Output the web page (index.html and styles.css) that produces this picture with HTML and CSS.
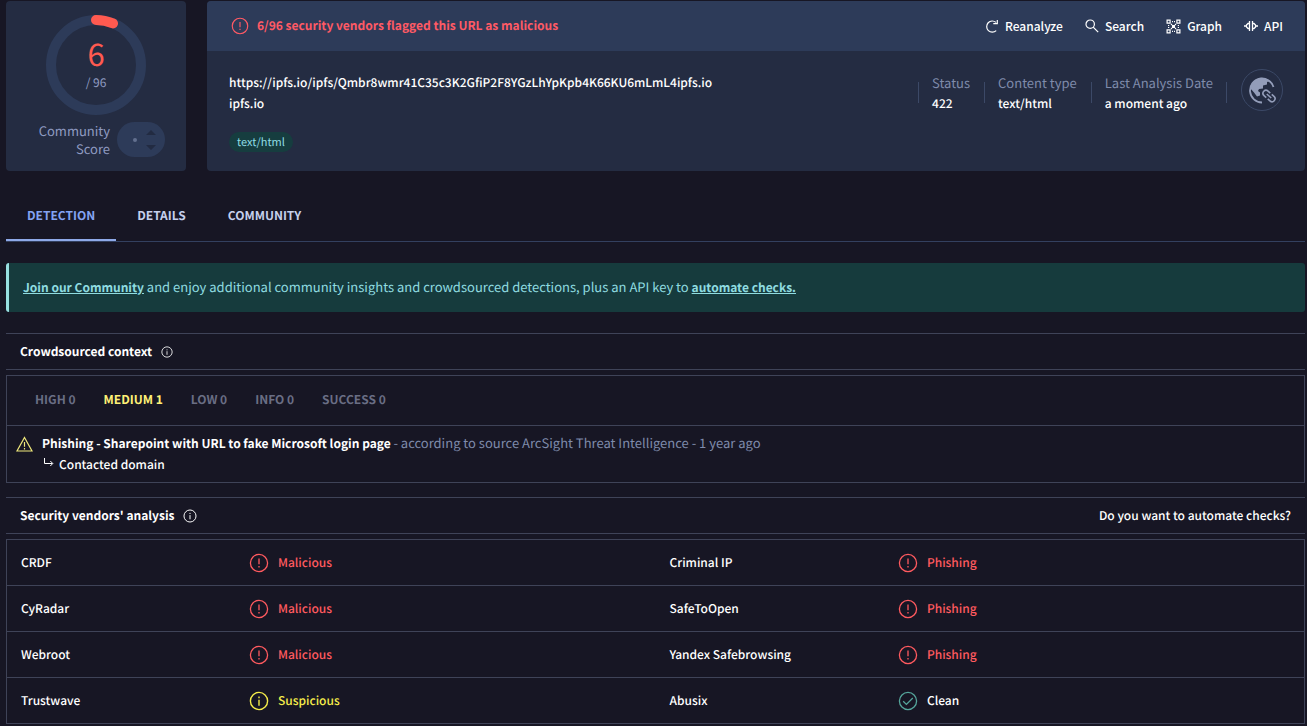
FILE: index.html
```html
<!DOCTYPE html>
<html lang="en">
<head>
<meta charset="utf-8">
<title>URL report</title>
<link rel="stylesheet" href="styles.css">
</head>
<body>
<svg class="defs" aria-hidden="true">
  <symbol id="alert" viewBox="0 0 20 20"><g fill="none" stroke="currentColor" stroke-width="1.3"><circle cx="10" cy="10" r="8.6"/><path d="M10 5.5v5.8M10 13v1.5"/></g></symbol>
  <symbol id="info" viewBox="0 0 20 20"><g fill="none" stroke="currentColor" stroke-width="1.4"><circle cx="10" cy="10" r="8.6"/><path d="M10 8.7v6M10 5.6v1.6"/></g></symbol>
  <symbol id="check" viewBox="0 0 20 20"><g fill="none" stroke="currentColor" stroke-width="1.3"><circle cx="10" cy="10" r="8.6"/><path d="M5.2 10.2l3.2 3.2 6.4-6.4"/></g></symbol>
</svg>
<main class="page">
  <section class="summary">
    <div class="score-card">
      <div class="gauge">
        <svg viewBox="0 0 100 100" aria-hidden="true">
          <circle cx="50" cy="50" r="45" fill="none" stroke="#2d3b59" stroke-width="10"/>
          <path d="M50 5A45 45 0 0 1 67 8.4" fill="none" stroke="#ff5a50" stroke-width="10" stroke-linecap="round"/>
        </svg>
        <div class="gauge-text"><span class="hits">6</span><span class="total">/ 96</span></div>
      </div>
      <div class="community">
        <span class="community-label">Community<br>Score</span>
        <span class="votes"><i class="dot"></i><svg width="10" height="20" viewBox="0 0 10 20" fill="#222b42" aria-hidden="true"><path d="M0 5l5-5 5 5zM0 15l5 5 5-5z"/></svg></span>
      </div>
    </div>
    <div class="url-card">
      <header class="url-head">
        <p class="flagged"><svg class="icon-18"><use href="#alert"/></svg>6/96 security vendors flagged this URL as malicious</p>
        <div class="actions">
          <button type="button"><svg width="14" height="14" viewBox="0 0 14 14" fill="none" stroke="currentColor" stroke-width="1.2"><path d="M11.2 11.600A5.600 5.600 0 1 1 11 3.400M12.300 1v3.700H8.300"/></svg>Reanalyze</button>
          <button type="button"><svg width="14" height="14" viewBox="0 0 14 14" fill="none" stroke="currentColor" stroke-width="1.2"><circle cx="5.2" cy="5.2" r="4.2"/><path d="M8.2 8.2l5 5"/></svg>Search</button>
          <button type="button"><svg width="15" height="15" viewBox="0 0 15 15" fill="none" stroke="currentColor" stroke-width="1.2"><path d="M1.1 1.1h3v3h-3zM10.9 1.1h3v3h-3zM1.1 10.9h3v3h-3zM10.9 10.9h3v3h-3z"/><path d="M6 2.6h3M6 12.4h3M2.6 6v3M12.4 6v3" stroke-dasharray="1 1"/><path d="M5 5l1 1M10 5l-1 1M5 10l1-1M10 10l-1-1"/><path d="M6 6h3v3H6z" fill="currentColor" stroke="none"/></svg>Graph</button>
          <button type="button"><svg width="14" height="12" viewBox="0 0 14 12" fill="none" stroke="currentColor" stroke-width="1.3"><path d="M5.500 1v10M8.500 1v10M5.500 3.500H4L2.500 5v2L4 8.500h1.500M8.500 3.500H10L11.500 5v2L10 8.500H8.500M0 6h2.500M11.500 6H14"/></svg>API</button>
        </div>
      </header>
      <div class="url-body">
        <div class="url-info">
          <p>https://ipfs.io/ipfs/Qmbr8wmr41C35c3K2GfiP2F8YGzLhYpKpb4K66KU6mLmL4ipfs.io</p>
          <p>ipfs.io</p>
          <span class="tag">text/html</span>
        </div>
        <dl class="facts">
          <div><dt>Status</dt><dd>422</dd></div>
          <div><dt>Content type</dt><dd>text/html</dd></div>
          <div><dt>Last Analysis Date</dt><dd>a moment ago</dd></div>
        </dl>
        <svg class="globe" viewBox="0 0 42 42" aria-hidden="true">
          <circle cx="21" cy="21" r="20.5" fill="none" stroke="#3c4967"/>
          <path d="M21 33.5A12 12 0 1 1 32.5 18" fill="none" stroke="#939db9" stroke-width="1.8"/>
          <path d="M9 19c1-5 5-9 11-10.3l6 1.3 3 2-3 1v2.5l-4 1v3l-4 .5-1 2 2 1.500v3l-3 1-3-4z" fill="#939db9"/>
          <g transform="translate(28 27) rotate(42)" fill="none" stroke="#939db9" stroke-width="1.6"><path d="M-1-3h-3a3 3 0 0 0 0 6h3M1-3h3a3 3 0 0 1 0 6h-3M-3 0h6"/></g>
        </svg>
      </div>
    </div>
  </section>

  <nav class="tabs">
    <a class="active" href="#detection">DETECTION</a>
    <a href="#details">DETAILS</a>
    <a href="#community">COMMUNITY</a>
  </nav>

  <p class="banner"><a href="#join">Join our Community</a> and enjoy additional community insights and crowdsourced detections, plus an API key to <a href="#automate">automate checks.</a></p>

  <section class="block">
    <div class="block-head"><h2>Crowdsourced context</h2><svg class="icon-12"><use href="#info"/></svg></div>
    <div class="context">
      <div class="levels"><span>HIGH 0</span><span class="medium">MEDIUM 1</span><span>LOW 0</span><span>INFO 0</span><span>SUCCESS 0</span></div>
      <div class="finding">
        <svg width="17" height="16" viewBox="0 0 17 16" fill="none" stroke="#efe87a" stroke-width="1.2" aria-hidden="true"><path d="M8.500 1.500L16 15H1zM8.500 6v4.800M8.500 12v1.500"/></svg>
        <div>
          <p><strong>Phishing - Sharepoint with URL to fake Microsoft login page</strong> <span class="source">- according to source ArcSight Threat Intelligence - 1 year ago</span></p>
          <p class="contacted"><svg width="10" height="9" viewBox="0 0 10 9" fill="none" stroke="currentColor" aria-hidden="true"><path d="M.5 0v5.500h8M6.300 3l2.500 2.500L6.300 8"/></svg>Contacted domain</p>
        </div>
      </div>
    </div>
  </section>

  <section class="block">
    <div class="block-head"><h2>Security vendors' analysis</h2><svg class="icon-14"><use href="#info"/></svg><a class="automate" href="#automate">Do you want to automate checks?</a></div>
    <table class="vendors">
      <tr><td>CRDF</td><td><span class="verdict bad"><svg><use href="#alert"/></svg>Malicious</span></td><td>Criminal IP</td><td><span class="verdict bad"><svg><use href="#alert"/></svg>Phishing</span></td></tr>
      <tr><td>CyRadar</td><td><span class="verdict bad"><svg><use href="#alert"/></svg>Malicious</span></td><td>SafeToOpen</td><td><span class="verdict bad"><svg><use href="#alert"/></svg>Phishing</span></td></tr>
      <tr><td>Webroot</td><td><span class="verdict bad"><svg><use href="#alert"/></svg>Malicious</span></td><td>Yandex Safebrowsing</td><td><span class="verdict bad"><svg><use href="#alert"/></svg>Phishing</span></td></tr>
      <tr><td>Trustwave</td><td><span class="verdict warn"><svg><use href="#info"/></svg>Suspicious</span></td><td>Abusix</td><td><span class="verdict clean"><svg><use href="#check"/></svg>Clean</span></td></tr>
    </table>
  </section>
</main>
</body>
</html>
```
FILE: styles.css
```css
* { box-sizing: border-box; }
body {
  margin: 0;
  background: #171624;
  color: #fff;
  font: 500 12px/20px "Noto Sans CJK JP", "Noto Sans", sans-serif;
  text-rendering: geometricPrecision;
}
p, h2, dl, dd { margin: 0; }
svg { flex: none; display: block; }
.defs { position: absolute; width: 0; height: 0; }
.page { padding: 1px 2px 0 6px; }
.icon-18 { width: 18px; height: 18px; }
.icon-14 { width: 14px; height: 14px; }
.icon-12 { width: 12px; height: 12px; }

.summary { display: flex; gap: 21px; }
.score-card {
  width: 180px;
  padding-top: 14px;
  background: #242c42;
  border-radius: 4px;
}
.gauge { display: grid; width: 100px; height: 100px; margin: 0 auto; }
.gauge > * { grid-area: 1 / 1; }
.gauge-text { display: flex; flex-direction: column; align-items: center; padding-top: 16px; font-weight: 400; }
.hits { color: #ff5a50; font-size: 31px; line-height: 44px; }
.total { color: #8f9bc1; font-size: 12px; line-height: 16px; }
.community { display: flex; justify-content: flex-end; gap: 7px; padding: 7px 21px 0 0; }
.community-label { color: #8f9bc1; font-size: 13px; font-weight: 400; line-height: 18px; text-align: right; }
.votes {
  display: flex;
  align-items: center;
  justify-content: flex-end;
  gap: 9px;
  width: 48px;
  height: 35px;
  padding-right: 9px;
  background: #2d3b59;
  border-radius: 18px;
}
.dot { width: 4px; height: 4px; border-radius: 50%; background: #62708f; }

.url-card { flex: 1; min-height: 170px; background: #242c42; border-radius: 4px; overflow: hidden; }
.url-head {
  display: flex;
  align-items: center;
  justify-content: space-between;
  height: 50px;
  padding: 0 22px 0 24px;
  background: #2d3b59;
}
.flagged { display: flex; align-items: center; gap: 8px; color: #ff5a65; font-weight: 700; }
.actions { display: flex; gap: 22px; }
.actions button {
  display: flex;
  align-items: center;
  gap: 6px;
  padding: 0;
  border: 0;
  background: none;
  color: #fff;
  font: inherit;
}
.url-body { display: flex; padding: 21px 22px 0; line-height: 21px; }
.url-info { flex: 1; }
.tag {
  display: inline-block;
  margin-top: 18px;
  padding: 0 8px;
  border-radius: 10px;
  background: #163d3f;
  color: #8fdde5;
  font-size: 11px;
  font-weight: 400;
  line-height: 20px;
}
.facts { display: flex; }
.facts div { position: relative; padding: 0 14px; }
.facts div::before, .facts div:last-child::after {
  content: "";
  position: absolute;
  top: 10px;
  left: 0;
  width: 1px;
  height: 21px;
  background: #3c4967;
}
.facts div:last-child::after { left: auto; right: 0; }
.facts dt { color: #7f8bab; font-size: 13px; font-weight: 400; }
.globe { width: 42px; height: 42px; margin: -3px 0 0 14px; }

.tabs { display: flex; margin-top: 21px; border-bottom: 1px solid #33405f; }
.tabs a {
  padding: 14px 21px 13px;
  border-bottom: 2px solid transparent;
  color: #c6d0ec;
  font-weight: 700;
  text-decoration: none;
}
.tabs .active { color: #84a3f3; border-color: #8ea9e8; }

.banner {
  margin-top: 21px;
  padding: 14px;
  border-left: 3px solid #98dfe0;
  border-radius: 3px;
  background: #163b3d;
  color: #8fdce0;
  font-size: 13px;
  font-weight: 400;
}
.banner a { color: inherit; font-size: 12px; font-weight: 700; }

.block { margin-top: 21px; }
.block + .block { margin-top: 14px; }
.block-head {
  display: flex;
  align-items: center;
  height: 37px;
  padding: 0 14px;
  gap: 9px;
  border: solid #3f4358;
  border-width: 1px 0;
}
h2 { font-size: 12px; font-weight: 700; }
.automate { margin-left: auto; color: #fff; text-decoration: none; }
.context { margin-top: 5px; border: 1px solid #3f4358; }
.levels {
  display: flex;
  gap: 28px;
  padding: 14px 28px 15px;
  border-bottom: 1px solid #3f4358;
  color: #6a6e84;
  font-weight: 700;
}
.medium { color: #fff077; }
.finding { display: flex; gap: 9px; padding: 6px 9px 7px; line-height: 21px; }
.finding > svg { margin-top: 4px; }
.finding strong { font-weight: 700; }
.source { color: #7f8bab; font-size: 13px; font-weight: 400; }
.contacted { display: flex; gap: 5px; padding-left: 2px; }
.contacted svg { margin-top: 4px; }

.vendors { width: 100%; margin-top: 5px; border: 1px solid #3f4358; border-collapse: collapse; table-layout: fixed; }
.vendors tr { height: 46px; border-bottom: 1px solid #3f4358; }
.vendors td { padding: 0 0 0 14px; }
.vendors td:nth-child(odd) { width: 17.6%; }
.vendors td:nth-child(even) { width: 32.4%; }
.verdict { display: flex; align-items: center; gap: 9px; }
.verdict svg { width: 20px; height: 20px; }
.bad { color: #ff5a5f; }
.warn { color: #f5ec4a; }
.clean svg { color: #55a59b; }
```
